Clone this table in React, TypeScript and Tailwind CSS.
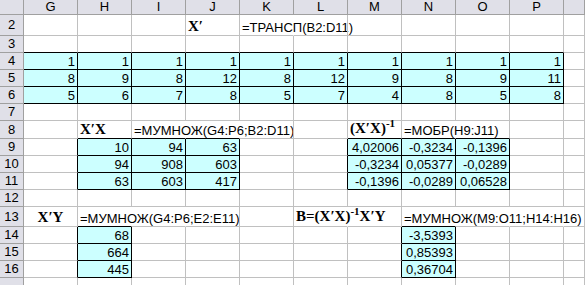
import type { ReactNode } from 'react';

type Cell = { v: ReactNode; kind: 'num' | 'txt' | 'math' | 'mathc' };

const COLS = ['G', 'H', 'I', 'J', 'K', 'L', 'M', 'N', 'O', 'P', ''];
const ROWS = [2, 3, 4, 5, 6, 7, 8, 9, 10, 11, 12, 13, 14, 15, 16, 17];

const isCyan = (r: number, c: number) =>
  (r >= 4 && r <= 6 && c >= 0 && c <= 9) ||
  (r >= 9 && r <= 11 && ((c >= 1 && c <= 3) || (c >= 6 && c <= 8))) ||
  (r >= 14 && r <= 16 && (c === 1 || c === 7));

// cells that the text of a left neighbour runs through: no grid line on the right
const overflowed = new Set(['2-4', '8-2', '8-3', '8-7', '13-1', '13-2', '13-5', '13-7', '13-8', '13-9']);

const Inv = () => <span className="relative -top-[6px] text-[11px]">-1</span>;

const data: Record<string, Cell> = {
  '2-3': { kind: 'math', v: 'X′' },
  '2-4': { kind: 'txt', v: '=ТРАНСП(B2:D11)' },
  '8-1': { kind: 'math', v: 'X′X' },
  '8-2': { kind: 'txt', v: '=МУМНОЖ(G4:P6;B2:D11)' },
  '8-6': { kind: 'math', v: <>(X′X)<Inv /></> },
  '8-7': { kind: 'txt', v: '=МОБР(H9:J11)' },
  '13-0': { kind: 'mathc', v: 'X′Y' },
  '13-1': { kind: 'txt', v: '=МУМНОЖ(G4:P6;E2:E11)' },
  '13-5': { kind: 'math', v: <>B=(X′X)<Inv />X′Y</> },
  '13-7': { kind: 'txt', v: '=МУМНОЖ(M9:O11;H14:H16)' },
};

const putRow = (r: number, c0: number, vals: string[]) =>
  vals.forEach((v, i) => (data[`${r}-${c0 + i}`] = { kind: 'num', v }));

putRow(4, 0, ['1', '1', '1', '1', '1', '1', '1', '1', '1', '1']);
putRow(5, 0, ['8', '9', '8', '12', '8', '12', '9', '8', '9', '11']);
putRow(6, 0, ['5', '6', '7', '8', '5', '7', '4', '8', '5', '8']);
putRow(9, 1, ['10', '94', '63']);
putRow(10, 1, ['94', '908', '603']);
putRow(11, 1, ['63', '603', '417']);
putRow(9, 6, ['4,02006', '-0,3234', '-0,1396']);
putRow(10, 6, ['-0,3234', '0,05377', '-0,0289']);
putRow(11, 6, ['-0,1396', '-0,0289', '0,06528']);
putRow(14, 1, ['68']);
putRow(15, 1, ['664']);
putRow(16, 1, ['445']);
putRow(14, 7, ['-3,5393']);
putRow(15, 7, ['0,85393']);
putRow(16, 7, ['0,36704']);

const head = 'flex items-center justify-center bg-[#e0e0e8] border-r border-b border-[#a0a0a0]';

export default function App() {
  return (
    <div className="w-[585px] h-[285px] overflow-hidden bg-white text-black font-['Liberation_Sans',Arial,sans-serif] text-[13px]">
      <div className="grid grid-cols-[24px_repeat(10,54px)_1fr] grid-rows-[15px_21px_17px_17px_17px_17px_17px_18px_17px_17px_17px_17px_20px_17px_17px_17px_17px]">
        <div className={head} />
        {COLS.map((l, i) => (
          <div key={i} className={head}>
            {l}
          </div>
        ))}
        {ROWS.map((r) => (
          <Row key={r} r={r} />
        ))}
      </div>
    </div>
  );
}

function Row({ r }: { r: number }) {
  return (
    <>
      {/* row 17 is cut by the window edge, its number falls outside */}
      <div className={head}>{r < 17 ? r : ''}</div>
      {COLS.map((_, c) => {
        const key = `${r}-${c}`;
        const cell = data[key];
        const cyan = isCyan(r, c);
        const right = overflowed.has(key)
          ? 'border-r-transparent'
          : cyan || isCyan(r, c + 1)
            ? 'border-r-black'
            : 'border-r-[#c0c0c0]';
        const bottom = cyan || isCyan(r + 1, c) ? 'border-b-black' : 'border-b-[#c0c0c0]';
        let align = 'justify-start pl-[2px]';
        if (cell?.kind === 'num') align = 'justify-end pr-[2px]';
        if (cell?.kind === 'mathc') align = 'justify-center';
        const isMath = cell?.kind === 'math' || cell?.kind === 'mathc';
        return (
          <div
            key={key}
            className={`flex items-end whitespace-nowrap leading-[15px] border-r border-b ${right} ${bottom} ${align} ${cyan ? 'bg-[#ccffff]' : ''}`}
          >
            {cell && (
              <span
                className={
                  isMath
                    ? "font-['Liberation_Serif','Times_New_Roman',serif] font-bold text-[15px] leading-[17px]"
                    : ''
                }
              >
                {cell.v}
              </span>
            )}
          </div>
        );
      })}
    </>
  );
}
